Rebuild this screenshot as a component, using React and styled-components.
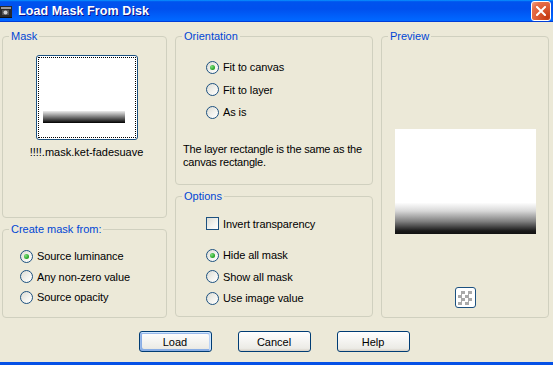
import React from "react";
import styled, { createGlobalStyle } from "styled-components";

const GlobalStyle = createGlobalStyle`
  html, body {
    margin: 0;
    padding: 0;
    width: 553px;
    height: 365px;
    overflow: hidden;
    background: #ece9d8;
  }
  * {
    box-sizing: border-box;
  }
`;

const Window = styled.div`
  width: 553px;
  height: 365px;
  display: flex;
  flex-direction: column;
  background: #ece9d8;
  border-bottom: 3px solid #0551e6;
  font-family: "Liberation Sans", Arial, sans-serif;
  font-size: 11px;
  color: #000;
`;

const TitleBar = styled.div`
  height: 22px;
  flex: none;
  display: flex;
  align-items: center;
  background: linear-gradient(
    180deg,
    #0997ff,
    #0053ee 8%,
    #0050ee 40%,
    #0066ff 88%,
    #0066ff 93%,
    #005bff 95%,
    #003dd7 96%,
    #003dd7
  );
`;

const TitleText = styled.span`
  margin-left: 4px;
  color: #fff;
  font-weight: bold;
  font-size: 12.5px;
  letter-spacing: 0.1px;
  text-shadow: 1px 1px #0f1089;
`;

const CloseButton = styled.div`
  margin-left: auto;
  margin-right: 2px;
  width: 20px;
  height: 20px;
  border: 1px solid #fff;
  border-radius: 3px;
  background: radial-gradient(
    circle at 85% 85%,
    #c43a12 0%,
    #dc5a33 45%,
    #e66f4b 75%,
    #f3a487 100%
  );
  display: flex;
  align-items: center;
  justify-content: center;
`;

const Body = styled.div`
  flex: 1;
  display: flex;
  flex-direction: column;
  padding: 8px 4px 0 2px;
`;

const Panels = styled.div`
  display: grid;
  grid-template-columns: 165px 198px 168px;
  column-gap: 8px;
`;

const Column = styled.div`
  display: flex;
  flex-direction: column;
  gap: ${(p) => p.$gap || 0}px;
`;

const Group = styled.fieldset`
  margin: 0;
  padding: 0;
  min-width: 0;
  height: ${(p) => p.$h}px;
  border: 1px solid #d0d0bf;
  border-radius: 4px;
  display: flex;
  flex-direction: column;
  align-items: ${(p) => (p.$center ? "center" : "stretch")};
`;

const Legend = styled.legend`
  margin-left: 6px;
  padding: 0 2px;
  color: #0046d5;
  line-height: 13px;
`;

const Thumb = styled.div`
  margin-top: 12px;
  margin-left: 4px;
  width: 102px;
  height: 85px;
  border: 1px solid #1c5180;
  border-radius: 3px;
  background: #fff;
  padding: 1px;
`;

const FocusRect = styled.div`
  width: 100%;
  height: 100%;
  border: 1px dotted #000;
  padding: 53px 0 0 4px;
`;

const ThumbBar = styled.div`
  width: 82px;
  height: 12px;
  background: linear-gradient(#ececec, #a8a8a8 30%, #4a4a4a 70%, #000);
`;

const Caption = styled.div`
  margin-top: 6px;
  margin-left: 4px;
  line-height: 13px;
`;

const Rows = styled.div`
  display: flex;
  flex-direction: column;
  padding-top: ${(p) => p.$top || 0}px;
  padding-left: ${(p) => p.$left || 0}px;
`;

const Row = styled.div`
  height: ${(p) => p.$h || 21}px;
  display: flex;
  align-items: center;
  gap: 4px;
  letter-spacing: -0.1px;
`;

const Radio = styled.span`
  width: 13px;
  height: 13px;
  flex: none;
  border-radius: 50%;
  border: 1px solid #1c5180;
  background: linear-gradient(135deg, #dcdcd4 0%, #f4f4f0 60%, #fff 100%);
  display: flex;
  align-items: center;
  justify-content: center;

  &::after {
    content: "";
    display: ${(p) => (p.$checked ? "block" : "none")};
    width: 5px;
    height: 5px;
    border-radius: 50%;
    background: radial-gradient(circle at 35% 35%, #7fe07f, #21a121 70%);
  }
`;

const Checkbox = styled.span`
  width: 13px;
  height: 13px;
  flex: none;
  border: 1px solid #1c5180;
  background: linear-gradient(135deg, #dcdcd4 0%, #f4f4f0 60%, #fff 100%);
`;

const Note = styled.p`
  margin: 19px 0 0 7px;
  line-height: 13px;
  letter-spacing: -0.2px;
`;

const Spacer = styled.div`
  height: ${(p) => p.$h}px;
`;

const PreviewImage = styled.div`
  margin-top: 86px;
  width: 141px;
  height: 105px;
  background: linear-gradient(
    180deg,
    #fff 0%,
    #fff 70%,
    #d8d8d8 78%,
    #808080 88%,
    #1a1a1a 97%,
    #111 100%
  );
`;

const CheckerButton = styled.div`
  margin-top: 53px;
  width: 21px;
  height: 21px;
  border: 1px solid #1c5180;
  border-radius: 3px;
  background: #fff;
  display: flex;
  align-items: center;
  justify-content: center;
`;

const Checker = styled.div`
  width: 14px;
  height: 14px;
  background-color: #fff;
  background-image: conic-gradient(
    #a9a9a9 0 25%,
    #fff 0 50%,
    #a9a9a9 0 75%,
    #fff 0
  );
  background-size: 7px 7px;
`;

const ButtonRow = styled.div`
  margin-top: 13px;
  display: flex;
  justify-content: center;
  gap: 26px;
  padding-right: 3px;
`;

const Button = styled.button`
  width: 73px;
  height: 21px;
  padding: 0;
  font-family: inherit;
  font-size: 11px;
  color: #000;
  border: 1px solid #003c74;
  border-radius: 3px;
  background: linear-gradient(180deg, #fff, #ecebe6 86%, #d6d0c5);
  box-shadow: ${(p) =>
    p.$default
      ? "inset -1px 1px #cee7ff, inset 1px 2px #98b8ea, inset -2px 2px #bcd4f6, inset 1px -1px #89ade4, inset 2px -2px #89ade4"
      : "none"};
`;

const TitleIcon = () => (
  <svg width="14" height="16" viewBox="0 0 14 16" style={{ flex: "none" }}>
    <rect x="0" y="3" width="12" height="11" fill="#2a2a2a" />
    <rect x="1" y="4" width="10" height="2" fill="#9a9a9a" />
    <rect x="2" y="7" width="7" height="5" fill="#555" />
    <circle cx="5.5" cy="9.5" r="2" fill="#cfcfcf" />
    <rect x="0" y="14" width="12" height="1" fill="#111" />
  </svg>
);

const CloseIcon = () => (
  <svg width="10" height="10" viewBox="0 0 10 10">
    <path d="M1 1 L9 9 M9 1 L1 9" stroke="#fff" strokeWidth="2" strokeLinecap="square" />
  </svg>
);

const Choice = ({ checked, children, h }) => (
  <Row $h={h}>
    <Radio $checked={checked} />
    <span>{children}</span>
  </Row>
);

export default function App() {
  return (
    <>
      <GlobalStyle />
      <Window>
        <TitleBar>
          <TitleIcon />
          <TitleText>Load Mask From Disk</TitleText>
          <CloseButton>
            <CloseIcon />
          </CloseButton>
        </TitleBar>
        <Body>
          <Panels>
            <Column $gap={5}>
              <Group $h={188} $center>
                <Legend>Mask</Legend>
                <Thumb>
                  <FocusRect>
                    <ThumbBar />
                  </FocusRect>
                </Thumb>
                <Caption>!!!!.mask.ket-fadesuave</Caption>
              </Group>
              <Group $h={95}>
                <Legend>Create mask from:</Legend>
                <Rows $top={10} $left={17}>
                  <Choice checked h={20.5}>Source luminance</Choice>
                  <Choice h={20.5}>Any non-zero value</Choice>
                  <Choice h={20.5}>Source opacity</Choice>
                </Rows>
              </Group>
            </Column>
            <Column $gap={5}>
              <Group $h={155}>
                <Legend>Orientation</Legend>
                <Rows $top={13} $left={30}>
                  <Choice checked h={22.5}>Fit to canvas</Choice>
                  <Choice h={22.5}>Fit to layer</Choice>
                  <Choice h={22.5}>As is</Choice>
                </Rows>
                <Note>
                  The layer rectangle is the same as the
                  <br />
                  canvas rectangle.
                </Note>
              </Group>
              <Group $h={127}>
                <Legend>Options</Legend>
                <Rows $top={10} $left={30}>
                  <Row $h={21}>
                    <Checkbox />
                    <span>Invert transparency</span>
                  </Row>
                  <Spacer $h={10.5} />
                  <Choice checked h={21.5}>Hide all mask</Choice>
                  <Choice h={21.5}>Show all mask</Choice>
                  <Choice h={21.5}>Use image value</Choice>
                </Rows>
              </Group>
            </Column>
            <Group $h={288} $center>
              <Legend>Preview</Legend>
              <PreviewImage />
              <CheckerButton>
                <Checker />
              </CheckerButton>
            </Group>
          </Panels>
          <ButtonRow>
            <Button $default>Load</Button>
            <Button>Cancel</Button>
            <Button>Help</Button>
          </ButtonRow>
        </Body>
      </Window>
    </>
  );
}
